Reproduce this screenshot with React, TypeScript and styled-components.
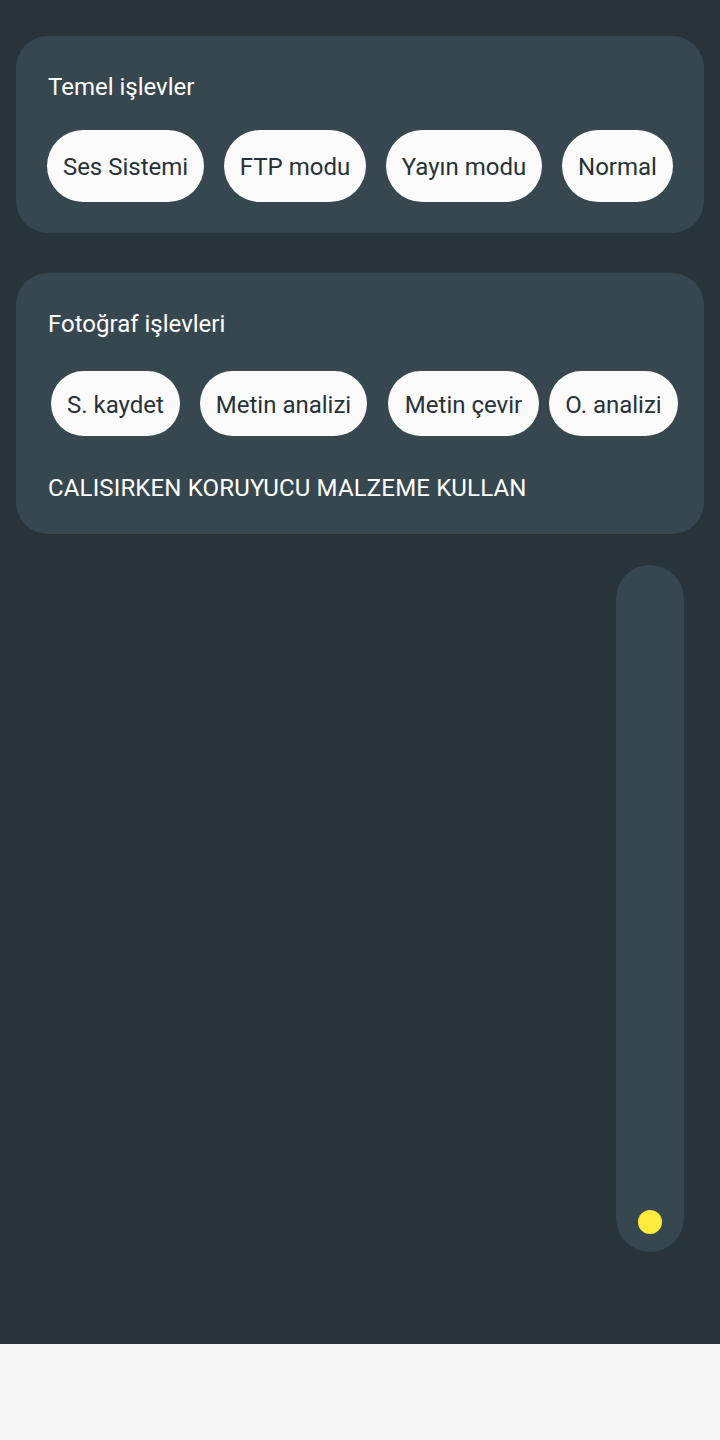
import React from "react";
import styled, { createGlobalStyle } from "styled-components";

const Global = createGlobalStyle`
  html, body { margin: 0; padding: 0; background: #f5f5f5; }
  body { font-family: Roboto, "Noto Sans", sans-serif; }
  * { box-sizing: border-box; }
`;

const Screen = styled.div`
  width: 720px;
  height: 1344px;
  background: #29333a;
  padding: 36px 16px 0;
  display: flex;
  flex-direction: column;
`;

const Card = styled.section<{ $pb: number }>`
  background: #37474f;
  border-radius: 32px;
  padding: 36px 32px ${(p) => p.$pb}px;
  display: flex;
  flex-direction: column;
  margin-bottom: 40px;
`;

const Title = styled.h2`
  margin: 0;
  font-size: 24px;
  line-height: 30px;
  font-weight: 400;
  color: #ffffff;
`;

const Row = styled.div<{ $mt: number; $ml: number }>`
  display: flex;
  margin-top: ${(p) => p.$mt}px;
  margin-left: ${(p) => p.$ml}px;
`;

const Pill = styled.button<{ $w: number; $h: number; $gap: number }>`
  width: ${(p) => p.$w}px;
  height: ${(p) => p.$h}px;
  margin-right: ${(p) => p.$gap}px;
  flex: none;
  border: none;
  border-radius: 999px;
  background: #fafafa;
  color: #263238;
  font-family: Roboto, "Noto Sans", sans-serif;
  font-size: 24px;
  padding: 2px 0 0;
  display: flex;
  align-items: center;
  justify-content: center;
  white-space: nowrap;
`;

const Notice = styled.p`
  margin: 37px 0 0;
  font-size: 24px;
  line-height: 30px;
  letter-spacing: 0.15px;
  color: #ffffff;
`;

const SliderWrap = styled.div`
  display: flex;
  justify-content: flex-end;
  padding-right: 20px;
  margin-top: -9px;
`;

const Track = styled.div`
  width: 68px;
  height: 687px;
  border-radius: 34px;
  background: #37474f;
  display: flex;
  flex-direction: column;
  justify-content: flex-end;
  align-items: center;
  padding-bottom: 18px;
`;

const Knob = styled.div`
  width: 24px;
  height: 24px;
  border-radius: 50%;
  background: #ffeb3b;
`;

const Footer = styled.div`
  height: 96px;
  background: #f5f5f5;
`;

const basic = [
  { t: "Ses Sistemi", w: 157, g: 20 },
  { t: "FTP modu", w: 142, g: 20 },
  { t: "Yayın modu", w: 156, g: 20 },
  { t: "Normal", w: 111, g: 0 },
];

const photo = [
  { t: "S. kaydet", w: 129, g: 20 },
  { t: "Metin analizi", w: 167, g: 21 },
  { t: "Metin çevir", w: 151, g: 10 },
  { t: "O. analizi", w: 129, g: 0 },
];

export default function App() {
  return (
    <>
      <Global />
      <Screen>
        <Card $pb={31}>
          <Title>Temel işlevler</Title>
          <Row $mt={28} $ml={-1}>
            {basic.map((b) => (
              <Pill key={b.t} $w={b.w} $h={72} $gap={b.g}>
                {b.t}
              </Pill>
            ))}
          </Row>
        </Card>
        <Card $pb={31}>
          <Title>Fotoğraf işlevleri</Title>
          <Row $mt={32} $ml={3}>
            {photo.map((b) => (
              <Pill key={b.t} $w={b.w} $h={65} $gap={b.g}>
                {b.t}
              </Pill>
            ))}
          </Row>
          <Notice>CALISIRKEN KORUYUCU MALZEME KULLAN</Notice>
        </Card>
        <SliderWrap>
          <Track>
            <Knob />
          </Track>
        </SliderWrap>
      </Screen>
      <Footer />
    </>
  );
}
